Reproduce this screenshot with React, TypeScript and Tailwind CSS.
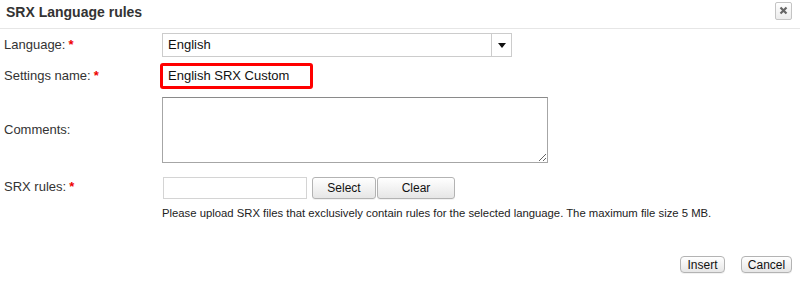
import React from 'react'

const btn =
  'flex items-center justify-center border border-[#b3b3b3] rounded-[3px] bg-gradient-to-b from-white to-[#e6e6e6] text-[12px] text-[#111] shadow-[0_1px_0_rgba(0,0,0,0.05)]'

function Label({ text, required }: { text: string; required?: boolean }) {
  return (
    <span className="text-[13px] text-[#333]">
      {text}
      {required && <span className="ml-[3px] font-bold text-[#e00]">*</span>}
    </span>
  )
}

export default function App() {
  return (
    <div
      className="w-[800px] h-[281px] bg-white flex flex-col overflow-hidden"
      style={{ fontFamily: '"Liberation Sans", Arial, sans-serif' }}
    >
      {/* Header */}
      <div className="h-[29px] flex items-center justify-between pl-[6px] pr-[8px] border-b border-[#e6e6e6]">
        <h1 className="text-[14px] font-bold text-[#333] -mt-[4px]">SRX Language rules</h1>
        <button className="h-[18px] w-[17px] -mt-[7px] flex items-center justify-center border border-[#c4c4c4] rounded-[2px] bg-gradient-to-b from-white to-[#ececec]">
          <svg width="9" height="9" viewBox="0 0 9 9">
            <path d="M1.5 1.5 L7.5 7.5 M7.5 1.5 L1.5 7.5" stroke="#666" strokeWidth="2.2" />
          </svg>
        </button>
      </div>

      {/* Form */}
      <div className="pl-[4px] flex flex-col">
        <div className="grid grid-cols-[158px_1fr] items-center mt-[4px] h-[24px]">
          <Label text="Language:" required />
          <div className="w-[350px] h-[24px] flex border border-[#ccc] bg-white">
            <div className="flex-1 flex items-center pl-[5px] text-[13px] text-[#111]">English</div>
            <div className="w-[20px] border-l border-[#ccc] flex items-center justify-center">
              <svg width="8" height="5" viewBox="0 0 8 5">
                <path d="M0 0 H8 L4 5 Z" fill="#111" />
              </svg>
            </div>
          </div>
        </div>

        <div className="grid grid-cols-[156px_1fr] items-center mt-[6px] h-[26px]">
          <Label text="Settings name:" required />
          <div className="w-[153px] h-[26px] border-[3px] border-[#f00] rounded-[3px] flex items-center pl-[5px] text-[13px] text-[#111]">
            English SRX Custom
          </div>
        </div>

        <div className="grid grid-cols-[158px_1fr] items-center mt-[8px] h-[66px]">
          <Label text="Comments:" />
          <textarea className="w-[386px] h-[66px] border border-[#a6a6a6] border-t-[#8a8a8a] bg-white outline-none" />
        </div>

        <div className="grid grid-cols-[159px_1fr] items-start mt-[14px] h-[22px]">
          <Label text="SRX rules:" required />
          <div className="flex items-center">
            <div className="w-[144px] h-[22px] border border-[#d4d4d4] bg-white" />
            <button className={`${btn} w-[64px] h-[22px] ml-[5px]`}>Select</button>
            <button className={`${btn} w-[78px] h-[22px] ml-[1px]`}>Clear</button>
          </div>
        </div>

        <p className="ml-[158px] mt-[6px] text-[11.3px] text-[#222]">
          Please upload SRX files that exclusively contain rules for the selected language. The maximum file size 5 MB.
        </p>
      </div>

      {/* Footer */}
      <div className="mt-auto mb-[8px] flex justify-end gap-[16px] pr-[8px]">
        <button className={`${btn} w-[45px] h-[17px] rounded-[4px]`}>Insert</button>
        <button className={`${btn} w-[51px] h-[17px] rounded-[4px]`}>Cancel</button>
      </div>
    </div>
  )
}
